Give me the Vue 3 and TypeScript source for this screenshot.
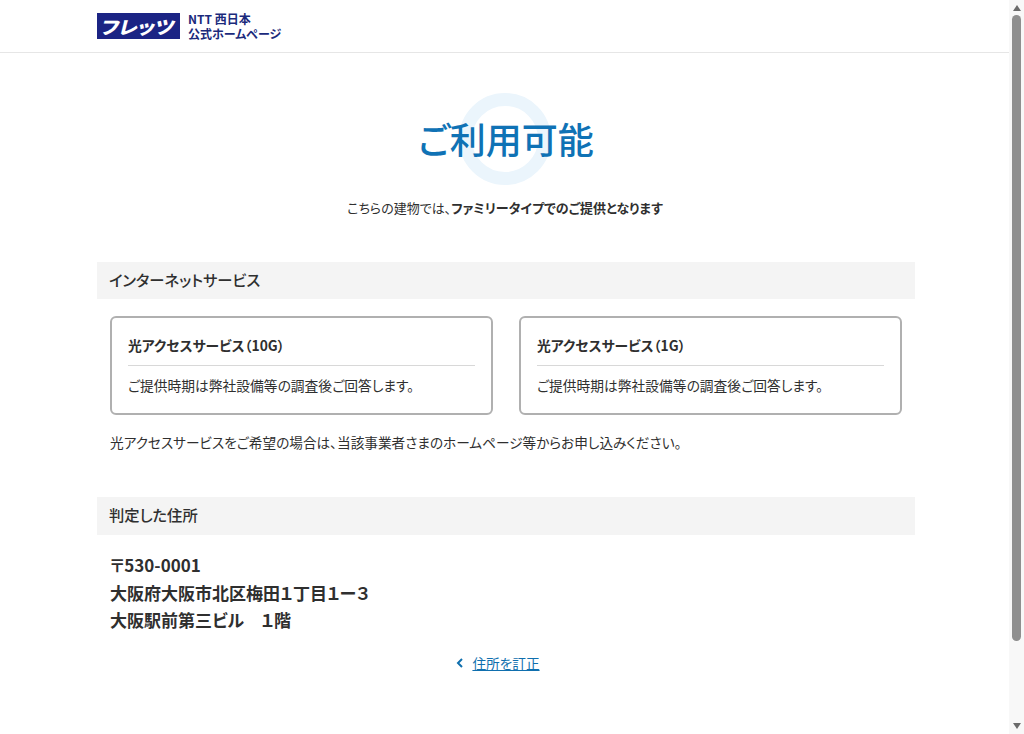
<script setup lang="ts">
interface ServiceCard {
  title: string;
  note: string;
}

const cards: ServiceCard[] = [
  { title: '光アクセスサービス（10G）', note: 'ご提供時期は弊社設備等の調査後ご回答します。' },
  { title: '光アクセスサービス（1G）', note: 'ご提供時期は弊社設備等の調査後ご回答します。' },
];

const addressLines: string[] = ['〒530-0001', '大阪府大阪市北区梅田１丁目１ー３', '大阪駅前第三ビル　１階'];
</script>

<template>
  <div class="window">
    <div class="page">
      <header class="site-header">
        <div class="brand">
          <div class="logo"><span class="logo__text">フレッツ</span></div>
          <p class="brand__text">NTT 西日本<br />公式ホームページ</p>
        </div>
      </header>

      <main class="content">
        <div class="result">
          <h1 class="result__title">ご利用可能</h1>
        </div>
        <p class="lead">こちらの建物では、<strong>ファミリータイプでのご提供となります</strong></p>

        <h2 class="section-title">インターネットサービス</h2>
        <div class="cards">
          <section v-for="card in cards" :key="card.title" class="card">
            <h3 class="card__title">{{ card.title }}</h3>
            <p class="card__note">{{ card.note }}</p>
          </section>
        </div>
        <p class="notice">光アクセスサービスをご希望の場合は、当該事業者さまのホームページ等からお申し込みください。</p>

        <h2 class="section-title section-title--address">判定した住所</h2>
        <div class="address">
          <p v-for="line in addressLines" :key="line">{{ line }}</p>
        </div>

        <div class="back">
          <svg class="back__icon" width="8" height="10" viewBox="0 0 8 10" aria-hidden="true">
            <path d="M6 1 2 5l4 4" fill="none" stroke="#0f6fae" stroke-width="2" />
          </svg>
          <a class="back__link" href="#">住所を訂正</a>
        </div>
      </main>
    </div>

    <div class="scrollbar" aria-hidden="true">
      <span class="scrollbar__arrow scrollbar__arrow--up"></span>
      <span class="scrollbar__thumb"></span>
      <span class="scrollbar__arrow scrollbar__arrow--down"></span>
    </div>
  </div>
</template>

<style>
html,
body {
  margin: 0;
  overflow: hidden;
}
</style>

<style scoped>
.window {
  display: flex;
  height: 734px;
  background: #fff;
  color: #2f2f2f;
  font-family: "Noto Sans CJK JP", "Noto Sans", sans-serif;
  font-feature-settings: "palt";
}
.page {
  flex: 1;
  min-width: 0;
}
.site-header {
  height: 52px;
  border-bottom: 1px solid #e6e6e6;
  padding: 0 97px;
}
.brand {
  display: flex;
  align-items: center;
  gap: 8px;
  height: 52px;
}
.logo {
  width: 83px;
  height: 26px;
  background: #1b2484;
  display: flex;
  align-items: center;
  justify-content: center;
  overflow: hidden;
}
.logo__text {
  color: #fff;
  font-size: 18px;
  font-weight: 900;
  line-height: 26px;
  transform: skewX(-14deg) scaleX(1.12);
}
.brand__text {
  margin: 0;
  color: #1b2a7c;
  font-size: 12px;
  font-weight: 700;
  line-height: 15px;
}
.content {
  width: 818px;
  margin: 0 0 0 97px;
}
.result {
  height: 92px;
  margin-top: 40px;
  display: flex;
  align-items: center;
  justify-content: center;
  position: relative;
  box-sizing: border-box;
}
.result::before {
  content: "";
  position: absolute;
  left: 362px;
  top: 0;
  width: 92px;
  height: 92px;
  box-sizing: border-box;
  border: 13px solid #ebf5fc;
  border-radius: 50%;
}
.result__title {
  position: relative;
  top: -1px;
  margin: 0;
  color: #0f72b5;
  font-size: 36px;
  font-weight: 500;
  line-height: 92px;
}
.lead {
  margin: 13px 0 0;
  font-size: 13px;
  line-height: 20px;
  text-align: center;
  padding-right: 2px;
}
.lead strong {
  font-weight: 700;
}
.section-title {
  margin: 44px 0 0;
  height: 37px;
  padding: 0 12px;
  background: #f4f4f4;
  font-size: 15.3px;
  font-weight: 500;
  line-height: 35px;
}
.section-title--address {
  margin-top: 45px;
  height: 38px;
  line-height: 35px;
}
.cards {
  display: flex;
  gap: 26px;
  margin: 17px 13px 0;
}
.card {
  flex: 1;
  height: 99px;
  box-sizing: border-box;
  padding: 17px 16px 0;
  border: 2px solid #b0b0b0;
  border-radius: 6px;
}
.card__title {
  margin: 0;
  padding-bottom: 10px;
  border-bottom: 1px solid #d8d8d8;
  font-size: 13.8px;
  font-weight: 700;
  line-height: 20px;
}
.card__note {
  margin: 9px 0 0;
  font-size: 13.75px;
  line-height: 20px;
}
.notice {
  margin: 17px 0 0 13px;
  font-size: 13.65px;
  line-height: 20px;
}
.address {
  margin: 16px 0 0 13px;
  font-size: 17px;
  font-weight: 700;
  line-height: 27.5px;
}
.address p {
  margin: 0;
}
.back {
  display: flex;
  align-items: center;
  justify-content: center;
  gap: 8px;
  margin-top: 19.5px;
  padding-right: 16px;
  font-size: 13.65px;
  line-height: 20px;
}
.back__link {
  color: #0f6fae;
}
.scrollbar {
  width: 15px;
  background: #f8f8f8;
  display: flex;
  flex-direction: column;
  align-items: center;
  padding: 5px 0;
  box-sizing: border-box;
}
.scrollbar__arrow {
  width: 0;
  height: 0;
  border-left: 4px solid transparent;
  border-right: 4px solid transparent;
}
.scrollbar__arrow--up {
  border-bottom: 6px solid #6b6b6b;
}
.scrollbar__arrow--down {
  margin-top: auto;
  border-top: 6px solid #6b6b6b;
}
.scrollbar__thumb {
  width: 9px;
  height: 626px;
  margin-top: 4px;
  background: #8f8f8f;
  border-radius: 5px;
}
</style>
